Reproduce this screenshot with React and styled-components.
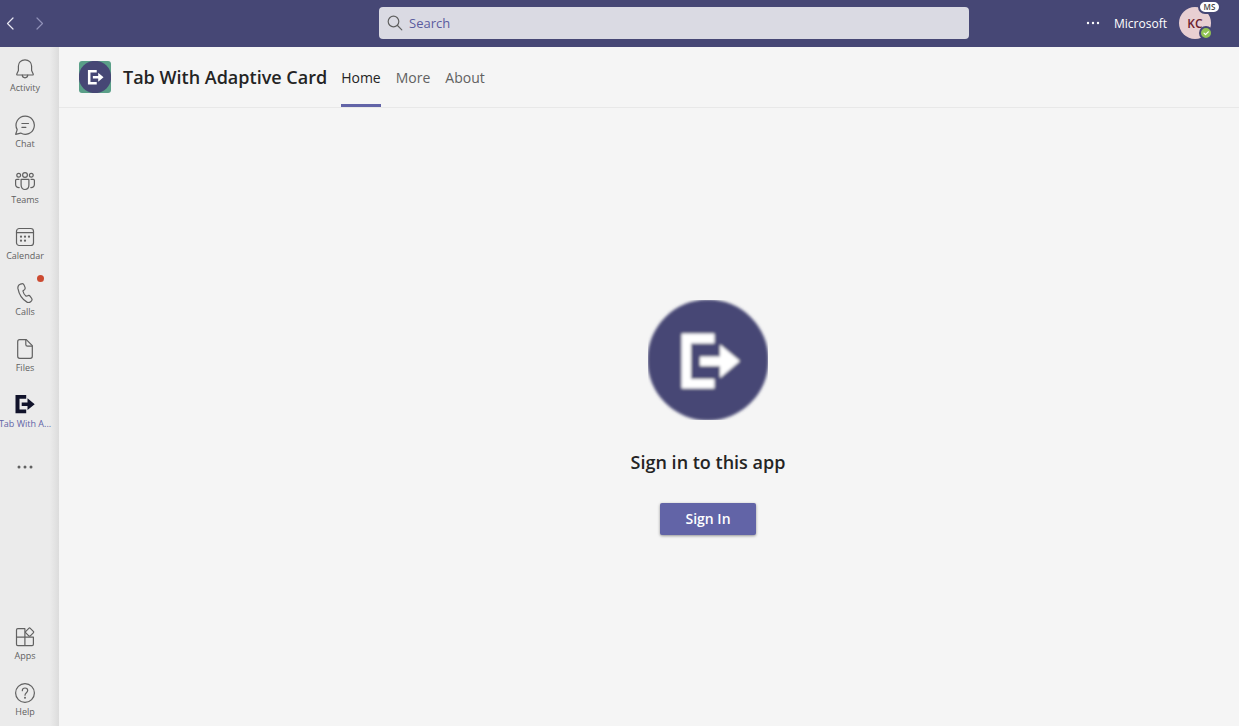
import React from "react";
import styled, { createGlobalStyle } from "styled-components";

const GlobalStyle = createGlobalStyle`
  * { box-sizing: border-box; }
  body {
    margin: 0;
    background: #f5f5f5;
    color: #242424;
    font-family: "Open Sans", "Noto Sans", sans-serif;
    font-size: 13px;
  }
  button, input { font: inherit; color: inherit; }
  svg { display: block; }
`;

const Shell = styled.div`
  min-height: 100vh;
  display: flex;
  flex-direction: column;
`;

const TitleBar = styled.header`
  height: 47px;
  display: grid;
  grid-template-columns: 379fr 590fr 270fr;
  align-items: center;
  padding-bottom: 1px;
  background: #464775;
  color: #fff;
`;

const PlainButton = styled.button`
  border: 0;
  padding: 0;
  background: transparent;
  cursor: pointer;
`;

const History = styled.div`
  display: flex;
  gap: 14px;
  padding-left: 3px;
`;

const HistoryButton = styled(PlainButton)`
  color: ${(p) => (p.$dim ? "#9091b8" : "#e8e8f2")};
`;

const SearchBox = styled.label`
  height: 32px;
  display: flex;
  align-items: center;
  gap: 6px;
  padding: 0 8px;
  border-radius: 4px;
  background: #dadae3;
  color: #616161;
`;

const SearchInput = styled.input`
  flex: 1;
  min-width: 0;
  border: 0;
  padding: 0;
  outline: 0;
  background: transparent;
  &::placeholder {
    color: #5b5c9f;
    opacity: 1;
  }
`;

const Account = styled.div`
  display: flex;
  align-items: center;
  justify-content: flex-end;
  padding-right: 28px;
`;

const MoreButton = styled(PlainButton)`
  margin-right: 13px;
`;

const Tenant = styled.span`
  margin-right: 12px;
  font-size: 12px;
`;

const Avatar = styled(PlainButton)`
  position: relative;
  width: 32px;
  height: 32px;
  border-radius: 50%;
  background: #e8cfd2;
  color: #6b2230;
  font-size: 12px;
  font-weight: 600;
`;

const AvatarTag = styled.span`
  position: absolute;
  top: -7px;
  right: -10px;
  width: 23px;
  height: 14px;
  border: 2px solid #464775;
  border-radius: 7px;
  background: #fff;
  color: #484644;
  font-size: 8px;
  line-height: 10px;
`;

const Presence = styled.span`
  position: absolute;
  right: -2px;
  bottom: -1px;
  border: 2px solid #464775;
  border-radius: 50%;
  background: #92c353;
`;

const Body = styled.div`
  flex: 1;
  display: flex;
`;

const Rail = styled.nav`
  width: 59px;
  flex: none;
  display: flex;
  flex-direction: column;
  gap: 7px;
  padding-bottom: 6px;
  background: linear-gradient(to right, #ebebeb 50px, #dcdcdc 59px);
`;

const RailButton = styled(PlainButton)`
  position: relative;
  width: 50px;
  height: 49px;
  display: flex;
  flex-direction: column;
  align-items: center;
  gap: 1px;
  padding-top: 12px;
  color: ${(p) => (p.$active ? "#6264a7" : "#616161")};
`;

const RailLabel = styled.span`
  font-size: 9px;
  line-height: 16px;
  white-space: nowrap;
`;

const Dot = styled.span`
  position: absolute;
  top: 4px;
  right: 6px;
  width: 7px;
  height: 7px;
  border-radius: 50%;
  background: #cc4a31;
`;

const OverflowButton = styled(PlainButton)`
  width: 50px;
  height: 56px;
  display: grid;
  place-items: center;
  color: #616161;
`;

const Spacer = styled.div`
  flex: 1;
`;

const Page = styled.div`
  flex: 1;
  min-width: 0;
  display: flex;
  flex-direction: column;
`;

const PageHeader = styled.div`
  height: 61px;
  display: flex;
  align-items: center;
  padding-left: 20px;
  border-bottom: 1px solid #e8e8e8;
`;

const AppBadge = styled.div`
  width: 32px;
  height: 32px;
  border-radius: 3px;
  background: #5a9f88;
`;

const Title = styled.h1`
  margin: 0 14px 0 12px;
  font-size: 18px;
  font-weight: 600;
  line-height: 24px;
`;

const Tabs = styled.nav`
  align-self: stretch;
  display: flex;
  gap: 15px;
`;

const Tab = styled.a`
  display: flex;
  align-items: center;
  padding-top: 4px;
  border-bottom: 3px solid ${(p) => (p.$active ? "#6264a7" : "transparent")};
  color: ${(p) => (p.$active ? "#242424" : "#616161")};
  font-size: 14px;
  text-decoration: none;
`;

const SignInPane = styled.main`
  flex: 1;
  display: flex;
  flex-direction: column;
  align-items: center;
  justify-content: center;
  padding-left: 118px;
`;

const Prompt = styled.h2`
  margin: 30px 0 29px;
  font-size: 18px;
  font-weight: 600;
  line-height: 24px;
`;

const SignInButton = styled.button`
  width: 96px;
  height: 32px;
  border: 0;
  border-radius: 2px;
  background: #6264a7;
  color: #fff;
  font-size: 14px;
  font-weight: 600;
  box-shadow: 0 1px 3px rgba(0, 0, 0, 0.4);
  cursor: pointer;
`;

const Icon = ({ size = 20, children, sw = 1.2 }) => (
  <svg
    width={size}
    height={size}
    viewBox={`0 0 ${size} ${size}`}
    fill="none"
    stroke="currentColor"
    strokeWidth={sw}
    strokeLinecap="round"
    strokeLinejoin="round"
    aria-hidden="true"
  >
    {children}
  </svg>
);

const BellIcon = () => (
  <Icon>
    <path d="M10 .8c-3.900 0-6.600 2.800-6.600 6.300v4.500L1.800 15.100c-.2.500 0 .9.600.9h15.200c.6 0 .8-.4.600-.9l-1.600-3.500V7.100C16.600 3.600 13.900.8 10 .8Z" />
    <path d="M7.300 16.100a2.700 2.700 0 0 0 5.400 0" />
  </Icon>
);

const ChatIcon = () => (
  <Icon>
    <path d="M10.200 1.100a9.100 9.100 0 1 1-4.500 17L.7 19.300l1.500-4.700a9.100 9.100 0 0 1 8-13.500Z" />
    <path d="M6.900 8.500h6.600M6.900 12.300h4" />
  </Icon>
);

const TeamsIcon = () => (
  <Icon>
    <circle cx="10" cy="4" r="2.400" />
    <circle cx="3.700" cy="4.300" r="1.900" />
    <circle cx="16.300" cy="4.300" r="1.900" />
    <path d="M6.100 8.300h7.800v5.800c0 2.700-1.600 4.400-3.900 4.400s-3.900-1.700-3.900-4.400Z" />
    <path d="M4 8.300H1.700c-.7 0-1.100.4-1.100 1.100v3.800c0 2.200 1.400 3.500 3.600 3.400M16 8.300h2.300c.7 0 1.100.4 1.100 1.100v3.800c0 2.200-1.400 3.500-3.600 3.400" />
  </Icon>
);

const CalendarIcon = () => (
  <Icon>
    <rect x="1.500" y="1.500" width="17" height="17" rx="2.800" />
    <path d="M1.500 5.700h17" />
    <g fill="currentColor" stroke="none">
      <circle cx="10" cy="9.700" r="1.100" />
      <circle cx="6" cy="9.700" r="1.100" />
      <circle cx="14" cy="9.700" r="1.100" />
      <circle cx="6" cy="13.700" r="1.100" />
      <circle cx="10" cy="13.700" r="1.100" />
    </g>
  </Icon>
);

const PhoneIcon = () => (
  <Icon>
    <path d="M5.300 1.200 6.700.8c1-.3 1.900.2 2.300 1.100l1 2.500c.3.800.1 1.600-.5 2.200L7.900 8c.4 2 1.500 3.800 3.200 5.200l2-.6c.8-.3 1.600 0 2.100.7l1.500 2.200c.5.800.4 1.700-.2 2.400l-.9.800c-1 .9-2.400 1-3.600.4C7.600 16.700 4.200 12.200 2.900 5.400 2.700 3.500 3.500 1.800 5.300 1.200Z" />
  </Icon>
);

const FileIcon = () => (
  <Icon>
    <path d="M11.300.7H4.700c-1.200 0-2 .8-2 2v14.600c0 1.200.8 2 2 2h10.600c1.200 0 2-.8 2-2V6.700L11.300.7Z" />
    <path d="M10.800.9v4.500c0 1 .6 1.700 1.700 1.700h4.600" />
  </Icon>
);

const ExitIcon = () => (
  <svg width="20" height="20" viewBox="0 0 20 20" fill="#11132b" aria-hidden="true">
    <path d="M.5 0h10.700v3.800H4.500v10.700h6.700v3.800H.5Z" />
    <path d="M6.700 7.500h5.800V3.300l7.200 5.900-7.200 5.900v-4.100H6.700Z" />
  </svg>
);

const AppsIcon = () => (
  <Icon>
    <path d="M9.900 10.100H1.500V3c0-.8.500-1.300 1.300-1.300h7.100v16.900H2.800c-.8 0-1.300-.5-1.300-1.300v-7.200M9.900 10.100h8.500v7.200c0 .8-.5 1.300-1.300 1.300H9.900" />
    <path d="m13.800 1.300-3 3c-.5.500-.5 1 0 1.500l3 3c.5.500 1 .5 1.500 0l3-3c.5-.5.5-1 0-1.500l-3-3c-.5-.5-1-.5-1.500 0Z" fill="#ebebeb" />
  </Icon>
);

const HelpIcon = () => (
  <Icon>
    <circle cx="10" cy="10" r="9.400" />
    <path d="M7.300 7.700C7.300 6 8.400 5 10 5s2.700 1 2.700 2.600c0 2.100-2.700 2.300-2.700 4.600" />
    <circle cx="10" cy="14.800" r=".4" fill="currentColor" />
  </Icon>
);

const DotsIcon = ({ r = 1.5, step = 6 }) => (
  <svg width="16" height="16" viewBox="0 0 16 16" fill="currentColor" aria-hidden="true">
    {[-1, 0, 1].map((n) => (
      <circle key={n} cx={8 + n * step} cy="8" r={r} />
    ))}
  </svg>
);

/* Round app logo; the soft variant has feathered edges. */
const AppLogo = ({ size, soft }) => (
  <svg width={size} height={size} viewBox="0 0 120 120" role="img" aria-label="App logo">
    <defs>
      <filter id="feather" x="-10%" y="-10%" width="120%" height="120%">
        <feGaussianBlur stdDeviation="1.4" />
      </filter>
    </defs>
    <g filter={soft ? "url(#feather)" : undefined}>
      <circle cx="60" cy="60" r="60.500" fill="#464775" />
      <g fill="#fff">
        <path d="M33.500 33.500H66.500V43.500H43V79H66.500V88.500H33.500Z" />
        <path d="M52 56.500H72V44.500L92 61L72 78V66H52Z" />
      </g>
    </g>
  </svg>
);

const mainItems = [
  { label: "Activity", icon: BellIcon },
  { label: "Chat", icon: ChatIcon },
  { label: "Teams", icon: TeamsIcon },
  { label: "Calendar", icon: CalendarIcon },
  { label: "Calls", icon: PhoneIcon, alert: true },
  { label: "Files", icon: FileIcon },
  { label: "Tab With A...", icon: ExitIcon, active: true },
];

const footerItems = [
  { label: "Apps", icon: AppsIcon },
  { label: "Help", icon: HelpIcon },
];

const RailItem = ({ label, icon: Glyph, alert, active }) => (
  <RailButton type="button" $active={active}>
    <Glyph />
    <RailLabel>{label}</RailLabel>
    {alert && <Dot />}
  </RailButton>
);

export default function App() {
  return (
    <>
      <GlobalStyle />
      <Shell>
        <TitleBar>
          <History>
            <HistoryButton type="button" aria-label="Back">
              <Icon size={15}><path d="M10 2 4.500 7.500 10 13" /></Icon>
            </HistoryButton>
            <HistoryButton type="button" aria-label="Forward" $dim>
              <Icon size={15}><path d="M5 2l5.500 5.500L5 13" /></Icon>
            </HistoryButton>
          </History>
          <SearchBox>
            <Icon size={16}>
              <circle cx="6.500" cy="6.500" r="5.300" />
              <path d="m10.500 10.500 4.300 4.300" />
            </Icon>
            <SearchInput type="text" placeholder="Search" aria-label="Search" />
          </SearchBox>
          <Account>
            <MoreButton type="button" aria-label="Settings and more">
              <DotsIcon r={1.2} step={5} />
            </MoreButton>
            <Tenant>Microsoft</Tenant>
            <Avatar type="button">
              KC
              <AvatarTag>MS</AvatarTag>
              <Presence>
                <Icon size={10}><path d="m3 5.200 1.500 1.500L7.300 3.800" stroke="#fff" /></Icon>
              </Presence>
            </Avatar>
          </Account>
        </TitleBar>
        <Body>
          <Rail>
            {mainItems.map((item) => <RailItem key={item.label} {...item} />)}
            <OverflowButton type="button" aria-label="More apps"><DotsIcon /></OverflowButton>
            <Spacer />
            {footerItems.map((item) => <RailItem key={item.label} {...item} />)}
          </Rail>
          <Page>
            <PageHeader>
              <AppBadge><AppLogo size={32} /></AppBadge>
              <Title>Tab With Adaptive Card</Title>
              <Tabs>
                <Tab href="#home" $active aria-current="page">Home</Tab>
                <Tab href="#more">More</Tab>
                <Tab href="#about">About</Tab>
              </Tabs>
            </PageHeader>
            <SignInPane>
              <AppLogo size={120} soft />
              <Prompt>Sign in to this app</Prompt>
              <SignInButton type="button">Sign In</SignInButton>
            </SignInPane>
          </Page>
        </Body>
      </Shell>
    </>
  );
}
